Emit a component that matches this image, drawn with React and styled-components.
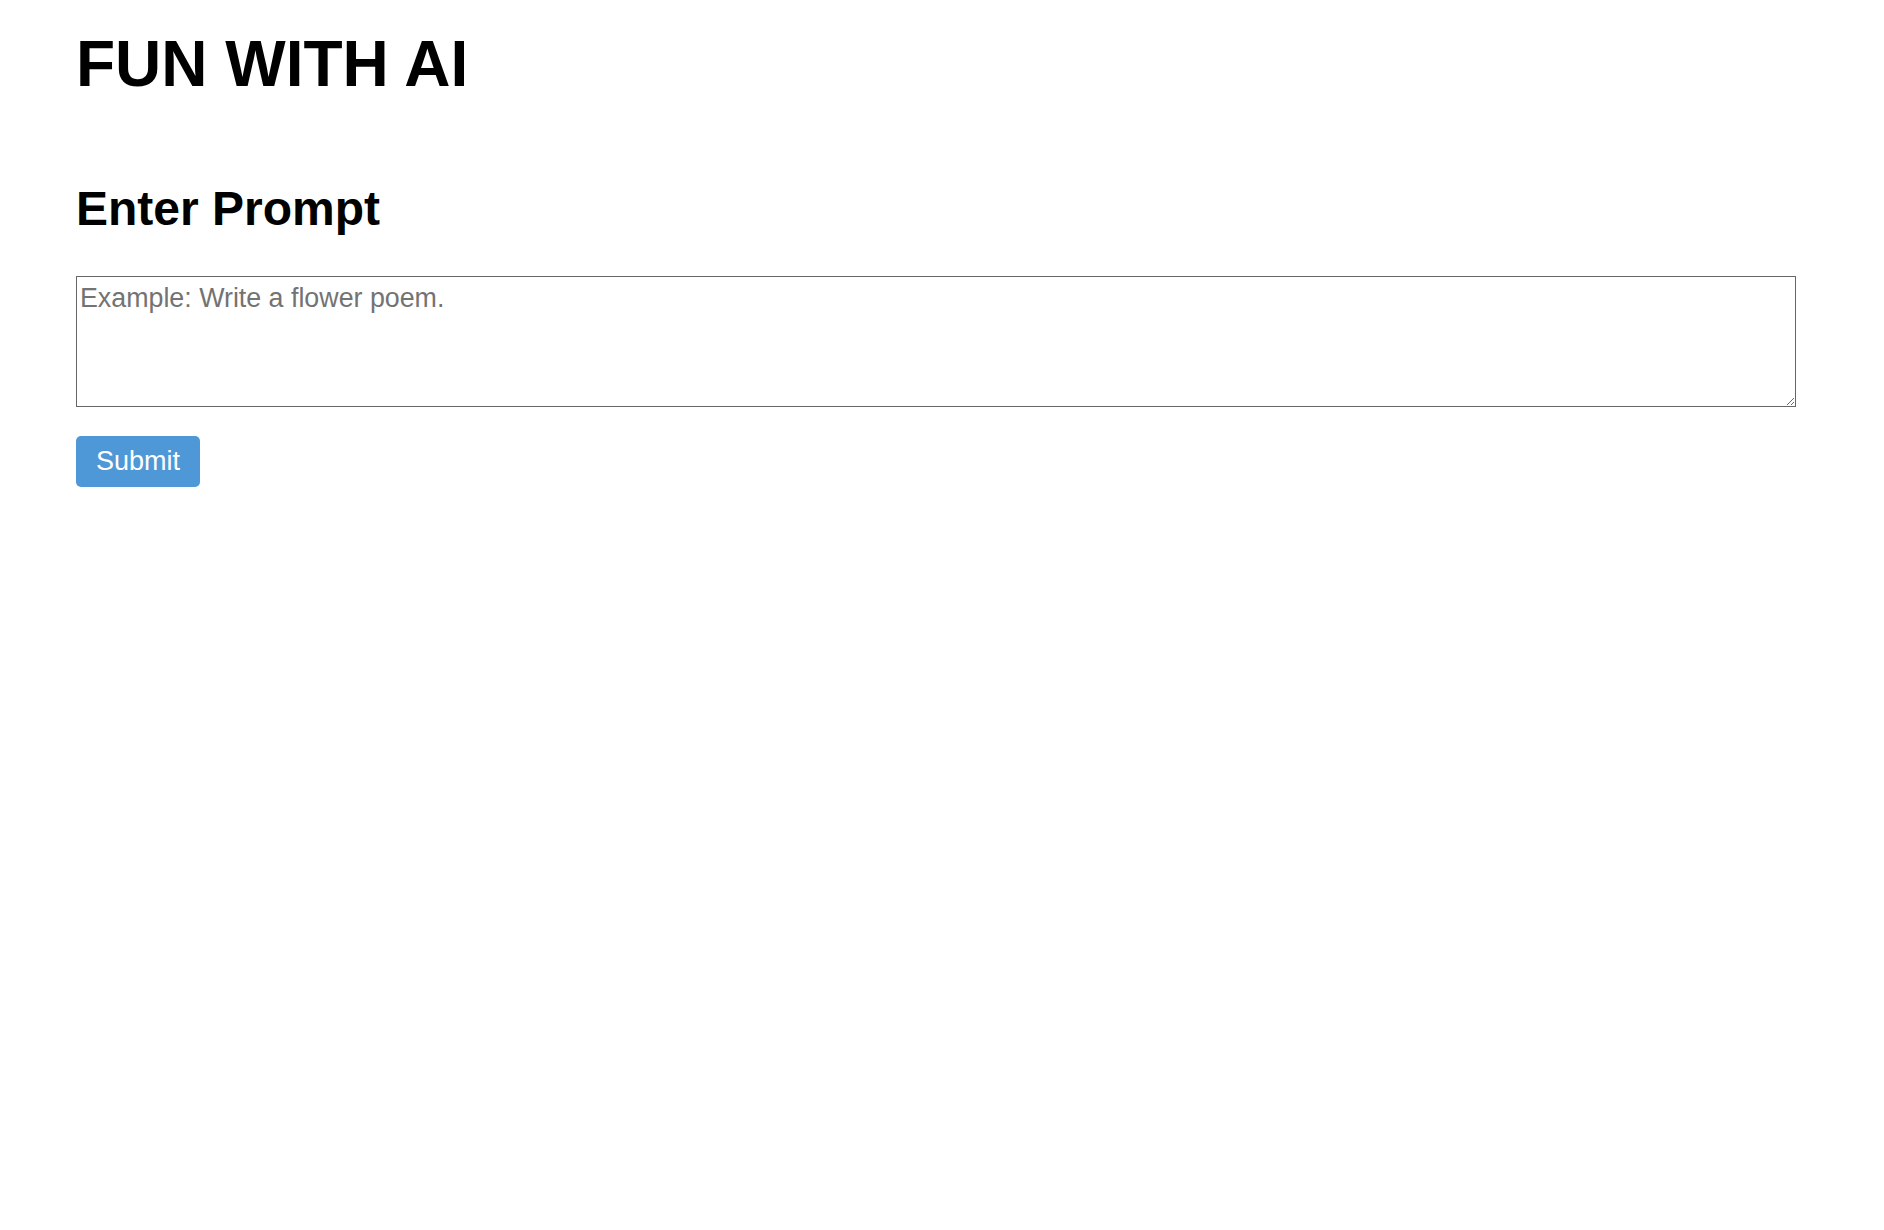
import React from "react";
import styled, { createGlobalStyle } from "styled-components";

const GlobalStyle = createGlobalStyle`
  html, body {
    margin: 0;
    padding: 0;
    background: #ffffff;
  }
  body {
    font-family: "Liberation Sans", Arial, Helvetica, sans-serif;
    color: #000000;
  }
  * { box-sizing: border-box; }
`;

const Page = styled.main`
  display: flex;
  flex-direction: column;
  align-items: flex-start;
  padding: 28px 88px 0 76px;
`;

const Title = styled.h1`
  margin: 0;
  font-size: 64px;
  line-height: 1.15;
  font-weight: 700;
`;

const Heading = styled.h2`
  margin: 79px 0 0 0;
  font-size: 48px;
  line-height: 1.15;
  font-weight: 700;
`;

const Form = styled.form`
  display: flex;
  flex-direction: column;
  align-items: flex-start;
  gap: 29px;
  width: 100%;
  margin-top: 40px;
`;

const PromptInput = styled.textarea`
  width: 100%;
  height: 131px;
  margin: 0;
  padding: 6px 3px 4px;
  border: 1px solid #666666;
  border-radius: 0;
  font-family: "Liberation Sans", Arial, Helvetica, sans-serif;
  font-size: 26.8px;
  line-height: 1.15;
  color: #000;
  resize: both;
  outline: none;

  &::placeholder {
    color: #737373;
  }
`;

const SubmitButton = styled.button`
  display: inline-flex;
  align-items: center;
  justify-content: center;
  height: 51px;
  padding: 0 20px;
  border: none;
  border-radius: 5px;
  background: #4f98d8;
  color: #ffffff;
  font-family: "Liberation Sans", Arial, Helvetica, sans-serif;
  font-size: 27px;
  cursor: pointer;
`;

export default function App() {
  return (
    <>
      <GlobalStyle />
      <Page>
        <Title>FUN WITH AI</Title>
        <Heading>Enter Prompt</Heading>
        <Form onSubmit={(e) => e.preventDefault()}>
          <PromptInput placeholder="Example: Write a flower poem." />
          <SubmitButton type="submit">Submit</SubmitButton>
        </Form>
      </Page>
    </>
  );
}
